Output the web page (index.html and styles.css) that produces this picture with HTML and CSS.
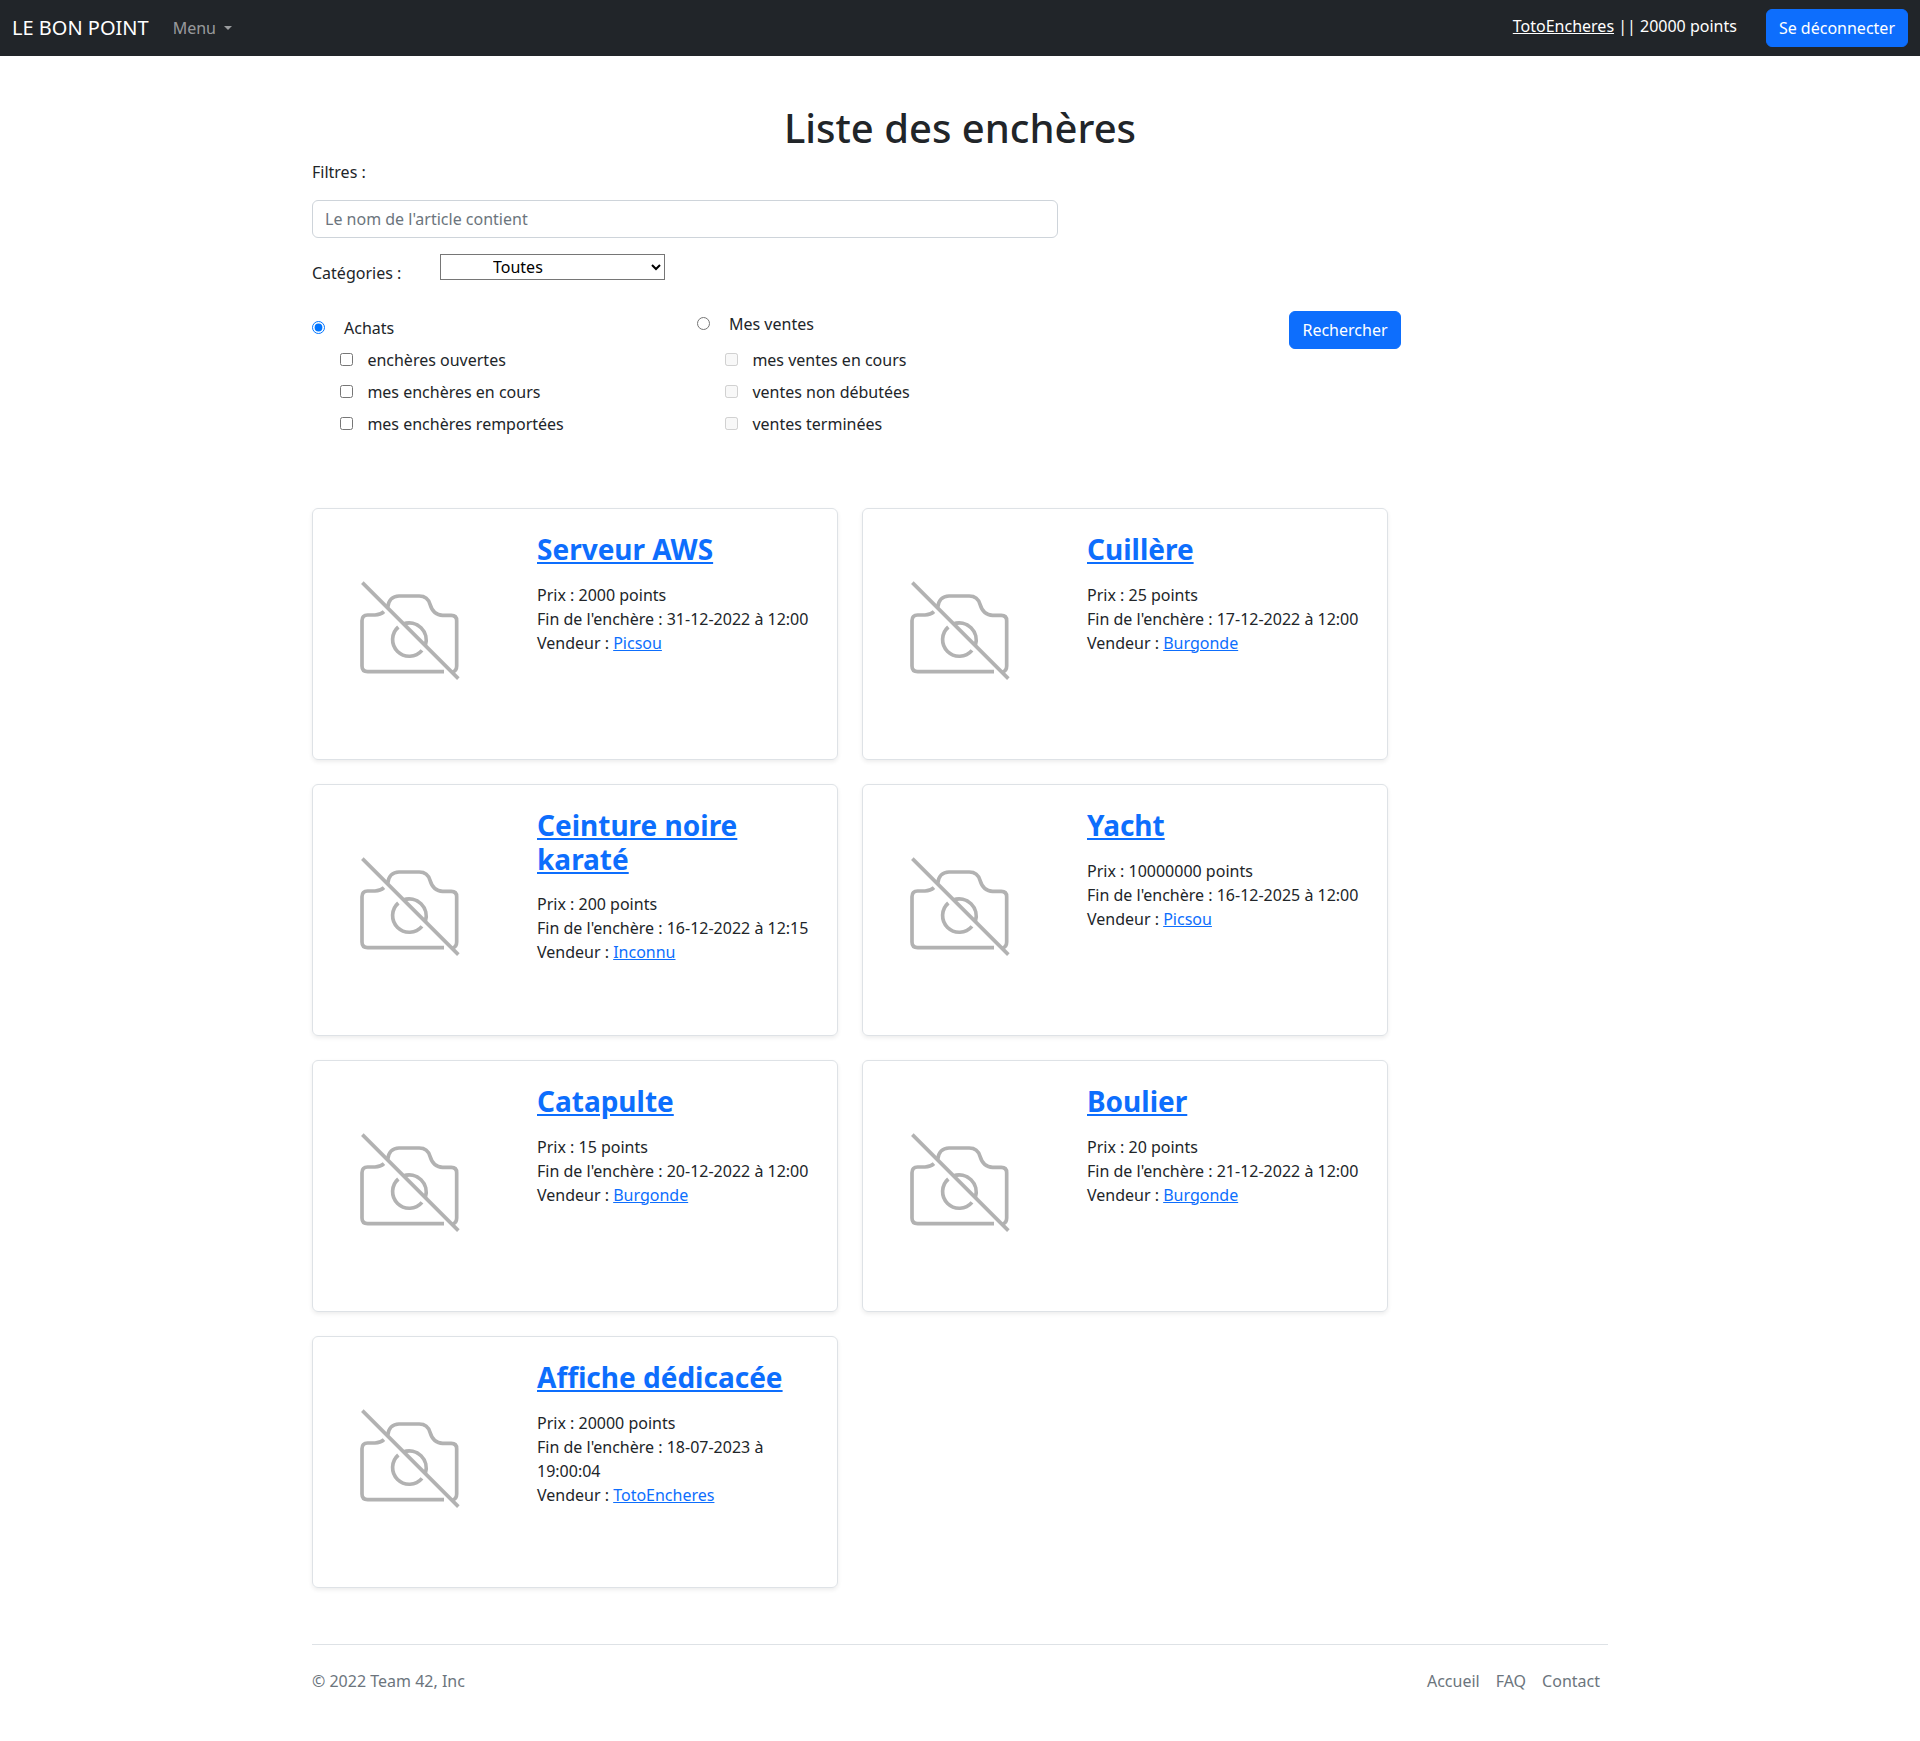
FILE: index.html
```html
<!DOCTYPE html>
<html lang="fr">
<head>
<meta charset="utf-8">
<title>Liste des enchères</title>
<link rel="stylesheet" href="styles.css">
</head>
<body>
<svg class="sprite" aria-hidden="true">
  <symbol id="no-photo" viewBox="-81 -153 600 750">
    <g fill="none" stroke="#b2b2b2" stroke-width="11">
      <path d="M143 143C145 121 158 108 177 108H238C256 108 266 119 270 133C276 153 287 166 308 166H334Q350 166 350 182V318Q350 332 338 336"/>
      <path d="M132 155Q121 165 105 165H83Q66 165 66 182V318Q66 335 83 335H312"/>
      <path d="M175 201A50 50 0 1 0 246 271"/>
      <path d="M190 192A51 51 0 0 1 256 256"/>
      <path d="M67 68L355 356"/>
    </g>
  </symbol>
</svg>
<header class="navbar">
  <a class="brand">LE BON POINT</a>
  <a class="menu">Menu</a>
  <p class="account"><a href="#">TotoEncheres</a> || 20000 points</p>
  <button class="btn">Se déconnecter</button>
</header>
<main class="container">
  <h1>Liste des enchères</h1>
  <form>
    <p class="filters-label">Filtres :</p>
    <input class="search" type="text" placeholder="Le nom de l'article contient">
    <div class="category">
      <label for="cat">Catégories :</label>
      <select id="cat"><option>Toutes</option></select>
    </div>
    <div class="options">
      <div class="group purchases">
        <label class="main"><input type="radio" name="mode" checked>Achats</label>
        <label><input type="checkbox">enchères ouvertes</label>
        <label><input type="checkbox">mes enchères en cours</label>
        <label><input type="checkbox">mes enchères remportées</label>
      </div>
      <div class="group">
        <label class="main"><input type="radio" name="mode">Mes ventes</label>
        <label><input type="checkbox" disabled>mes ventes en cours</label>
        <label><input type="checkbox" disabled>ventes non débutées</label>
        <label><input type="checkbox" disabled>ventes terminées</label>
      </div>
      <button class="btn" type="button">Rechercher</button>
    </div>
  </form>
  <section class="cards">
    <article class="card">
      <svg class="photo"><use href="#no-photo"/></svg>
      <div class="body"><h2><a href="#">Serveur AWS</a></h2>
        <p>Prix : 2000 points</p><p>Fin de l'enchère : 31-12-2022 à 12:00</p><p>Vendeur : <a href="#">Picsou</a></p></div>
    </article>
    <article class="card">
      <svg class="photo"><use href="#no-photo"/></svg>
      <div class="body"><h2><a href="#">Cuillère</a></h2>
        <p>Prix : 25 points</p><p>Fin de l'enchère : 17-12-2022 à 12:00</p><p>Vendeur : <a href="#">Burgonde</a></p></div>
    </article>
    <article class="card">
      <svg class="photo"><use href="#no-photo"/></svg>
      <div class="body"><h2><a href="#">Ceinture noire karaté</a></h2>
        <p>Prix : 200 points</p><p>Fin de l'enchère : 16-12-2022 à 12:15</p><p>Vendeur : <a href="#">Inconnu</a></p></div>
    </article>
    <article class="card">
      <svg class="photo"><use href="#no-photo"/></svg>
      <div class="body"><h2><a href="#">Yacht</a></h2>
        <p>Prix : 10000000 points</p><p>Fin de l'enchère : 16-12-2025 à 12:00</p><p>Vendeur : <a href="#">Picsou</a></p></div>
    </article>
    <article class="card">
      <svg class="photo"><use href="#no-photo"/></svg>
      <div class="body"><h2><a href="#">Catapulte</a></h2>
        <p>Prix : 15 points</p><p>Fin de l'enchère : 20-12-2022 à 12:00</p><p>Vendeur : <a href="#">Burgonde</a></p></div>
    </article>
    <article class="card">
      <svg class="photo"><use href="#no-photo"/></svg>
      <div class="body"><h2><a href="#">Boulier</a></h2>
        <p>Prix : 20 points</p><p>Fin de l'enchère : 21-12-2022 à 12:00</p><p>Vendeur : <a href="#">Burgonde</a></p></div>
    </article>
    <article class="card">
      <svg class="photo"><use href="#no-photo"/></svg>
      <div class="body"><h2><a href="#">Affiche dédicacée</a></h2>
        <p>Prix : 20000 points</p><p>Fin de l'enchère : 18-07-2023 à 19:00:04</p><p>Vendeur : <a href="#">TotoEncheres</a></p></div>
    </article>
  </section>
  <footer>
    <p>© 2022 Team 42, Inc</p>
    <nav><a>Accueil</a><a>FAQ</a><a>Contact</a></nav>
  </footer>
</main>
</body>
</html>
```
FILE: styles.css
```css
* { box-sizing: border-box; }
body {
  margin: 0;
  font: 16px/1.5 "Noto Sans", "Liberation Sans", sans-serif;
  color: #212529;
  background: #fff;
}
p, h1, h2 { margin: 0; }
a[href] { color: #0d6efd; text-decoration: underline; }
.sprite { display: block; width: 0; height: 0; }
.navbar {
  display: flex;
  align-items: center;
  height: 56px;
  padding: 0 12px;
  background: #212529;
  color: #fff;
}
.brand { font-size: 20px; line-height: 30px; }
.menu { margin-left: 24px; color: rgba(255, 255, 255, .55); }
.menu::after {
  content: "";
  display: inline-block;
  margin-left: 8px;
  vertical-align: 4px;
  border-top: 4.8px solid;
  border-left: 4.8px solid transparent;
  border-right: 4.8px solid transparent;
}
.account { margin: 0 29px 4px auto; }
.navbar .account a { color: #fff; }
.btn {
  height: 38px;
  padding: 6px 12px;
  border: 1px solid #0d6efd;
  border-radius: 6px;
  background: #0d6efd;
  color: #fff;
  font: inherit;
}
.container { width: 1296px; margin: 0 auto; padding-top: 48px; }
h1 { font-size: 40px; font-weight: 500; line-height: 48px; text-align: center; }
.filters-label { margin: 8px 0 16px; }
.search {
  display: block;
  width: 746px;
  height: 38px;
  padding: 6px 12px;
  border: 1px solid #ced4da;
  border-radius: 6px;
  font: inherit;
}
.search::placeholder { color: #6c757d; opacity: 1; }
.category { display: flex; align-items: flex-start; margin-top: 16px; height: 57px; }
.category label { width: 128px; padding-top: 7px; }
select {
  width: 225px;
  height: 26px;
  padding: 0 0 0 48px;
  font: inherit;
  background: #fff;
  color: #000;
}
.options { display: flex; align-items: flex-start; width: 1089px; height: 197px; }
.group { width: 385px; display: flex; flex-direction: column; gap: 8px; padding-top: 1px; }
.group label { display: flex; padding-left: 28px; gap: 14.4px; }
.group .main { padding-left: 0; gap: 19px; margin-bottom: 4px; }
.group input { width: 13px; height: 13px; margin: 5px 0 0; }
.purchases { padding-top: 5px; }
.purchases .main { margin-bottom: 0; }
.options .btn { width: 112px; margin-left: auto; }
.cards { display: grid; grid-template-columns: 526px 526px; gap: 24px; }
.card {
  display: flex;
  height: 252px;
  border: 1px solid #dee2e6;
  border-radius: 6px;
  box-shadow: 0 2px 4px rgba(0, 0, 0, .075);
}
.photo { width: 200px; height: 250px; flex: none; }
.body { flex: 1; padding: 24px; }
h2 { margin-bottom: 16px; font-size: 28px; font-weight: 700; line-height: 1.2; }
footer {
  display: flex;
  justify-content: space-between;
  margin-top: 56px;
  padding-top: 24px;
  border-top: 1px solid #dee2e6;
  color: #6c757d;
}
footer nav { display: flex; gap: 16px; padding-right: 8px; }
```
